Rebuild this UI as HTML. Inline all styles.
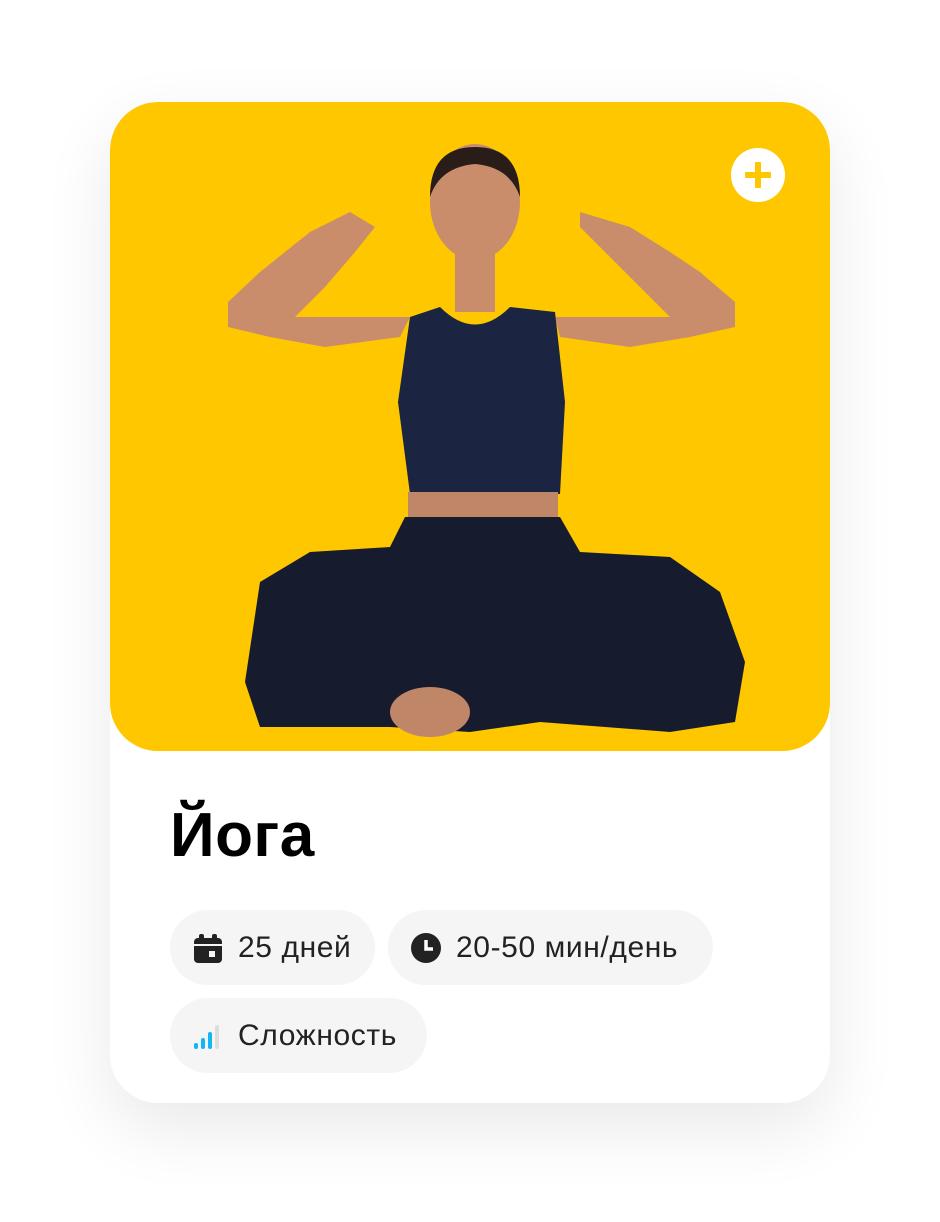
<!DOCTYPE html>
<html><head><meta charset="utf-8"><style>
body{margin:0;width:940px;height:1222px;background:#fff;font-family:"Liberation Sans","Noto Sans CJK SC",sans-serif;position:relative;overflow:hidden}
.card{position:absolute;left:110px;top:102px;width:720px;height:1001px;border-radius:48px;background:#fff;box-shadow:0 25px 70px rgba(0,0,0,0.09);overflow:hidden}
.img{position:absolute;left:0;top:0;width:720px;height:649px;background:#ffc700;border-radius:48px}
.plus{position:absolute;left:621px;top:46px;width:54px;height:54px;border-radius:50%;background:#fff}
.plus:before{content:"";position:absolute;left:14px;top:24px;width:26px;height:6px;background:#ffc700;border-radius:1px}
.plus:after{content:"";position:absolute;left:24px;top:14px;width:6px;height:26px;background:#ffc700;border-radius:1px}
h1{position:absolute;left:60px;top:698px;margin:0;font-size:62px;font-weight:bold;color:#000;letter-spacing:0.5px}
.chip{position:absolute;height:75px;border-radius:38px;background:#f5f5f5;font-size:30px;color:#222;display:flex;align-items:center;box-sizing:border-box;padding-left:22px;letter-spacing:0.6px}
.chip svg{margin-right:14px}
</style></head><body>
<div class="card">
<div class="img">
<svg width="720" height="649" style="position:absolute;left:0;top:0">
<path d="M240 110 L200 130 L175 150 L150 170 L118 200 L118 225 L160 235 L215 245 L290 235 L300 215 L250 215 L185 215 L215 185 L245 150 L265 125 Z" fill="#c98d6c"/>
<path d="M470 110 L520 125 L560 150 L590 170 L625 200 L625 225 L580 235 L520 245 L450 235 L445 215 L495 215 L560 215 L530 185 L495 150 L470 125 Z" fill="#c98d6c"/>
<ellipse cx="365" cy="100" rx="45" ry="58" fill="#c98d6c"/>
<path d="M320 95 Q320 45 365 45 Q410 45 410 95 Q400 65 365 62 Q330 65 320 95Z" fill="#2a1c18"/>
<rect x="345" y="150" width="40" height="60" fill="#c98d6c"/>
<path d="M300 215 L330 205 Q365 240 400 205 L445 210 L455 300 L450 392 L300 392 L288 300 Z" fill="#1b2440"/>
<rect x="298" y="390" width="150" height="30" fill="#c08668"/>
<path d="M295 415 L450 415 L470 450 L560 455 L610 490 L635 560 L625 620 L560 630 L430 620 L360 630 L280 625 L150 625 L135 580 L150 480 L200 450 L280 445 Z" fill="#171b2e"/>
<ellipse cx="320" cy="610" rx="40" ry="25" fill="#c08668"/>
</svg>
<div class="plus"></div>
</div>
<h1>Йога</h1>
<div class="chip" style="left:60px;top:808px;width:205px">
<svg width="32" height="32" viewBox="0 0 32 32"><rect x="2" y="6" width="28" height="25" rx="4" fill="#222"/><rect x="7" y="2" width="5" height="7" rx="2" fill="#222"/><rect x="20" y="2" width="5" height="7" rx="2" fill="#222"/><rect x="2" y="12" width="28" height="2" fill="#f5f5f5"/><rect x="17" y="19" width="6" height="6" fill="#f5f5f5"/></svg>25 дней</div>
<div class="chip" style="left:278px;top:808px;width:325px">
<svg width="32" height="32" viewBox="0 0 32 32"><circle cx="16" cy="16" r="15" fill="#222"/><path d="M16 8 V17 H23" stroke="#fff" stroke-width="3.5" fill="none"/></svg>20-50 мин/день</div>
<div class="chip" style="left:60px;top:896px;width:257px">
<svg width="32" height="32" viewBox="0 0 32 32"><rect x="2" y="23" width="4" height="6" rx="2" fill="#12b5f5"/><rect x="9" y="18" width="4" height="11" rx="2" fill="#12b5f5"/><rect x="16" y="12" width="4" height="17" rx="2" fill="#12b5f5"/><rect x="23" y="5" width="4" height="24" rx="2" fill="#ddd"/></svg>Сложность</div>
</div>
</body></html>
